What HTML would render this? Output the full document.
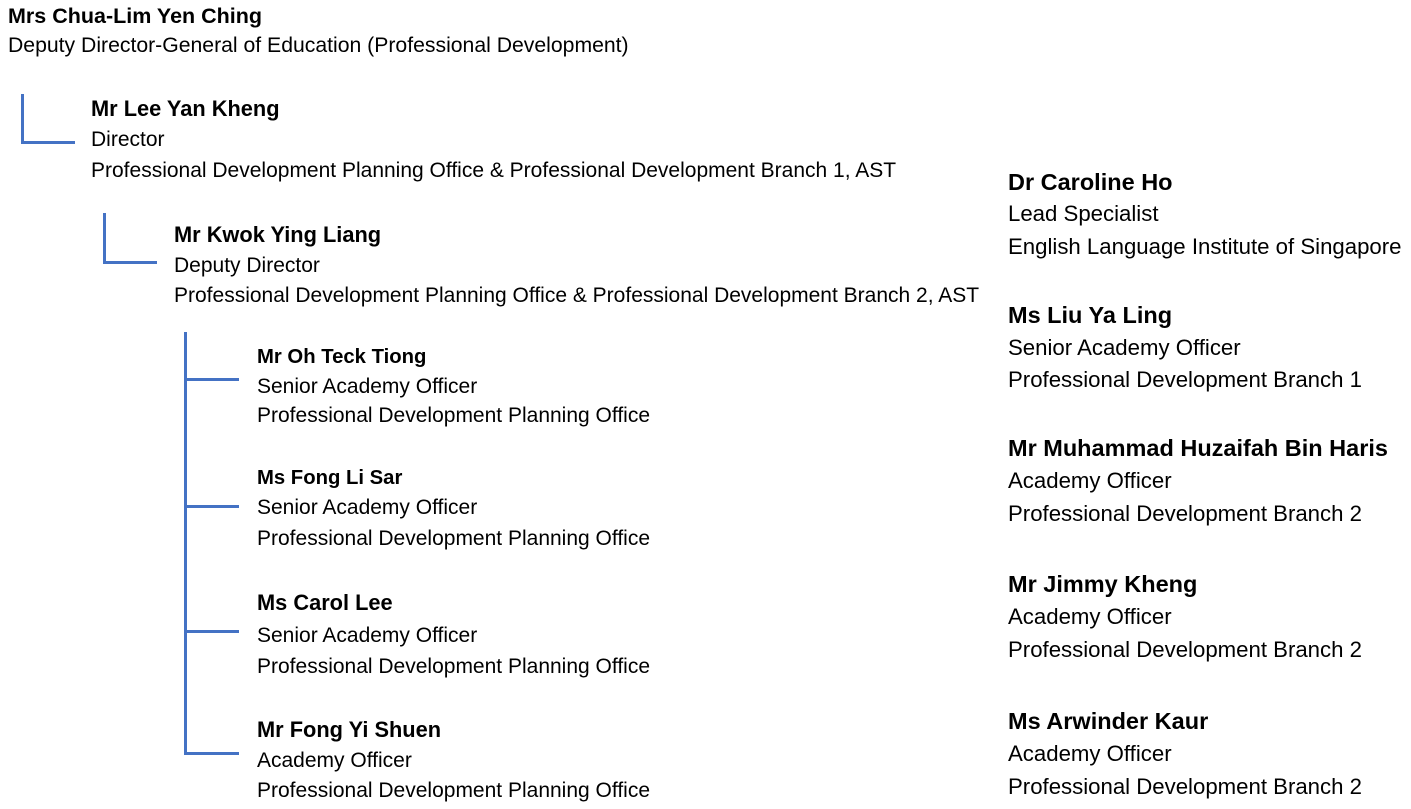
<!DOCTYPE html>
<html><head><meta charset="utf-8"><style>
html,body{margin:0;padding:0;background:#fff;}
body{width:1411px;height:809px;position:relative;overflow:hidden;font-family:"Liberation Sans",sans-serif;color:#000;}
.t{position:absolute;white-space:nowrap;height:24px;line-height:24px;font-size:21px;}
.b{font-weight:bold;font-size:21.8px;}
.r{font-size:22.2px;}
.rb{font-weight:bold;font-size:23.5px;}
.ln{position:absolute;background:#4472C4;}
</style></head><body>
<div class="t" style="left:8px;top:4px;font-weight:bold;font-size:21.5px">Mrs Chua-Lim Yen Ching</div>
<div class="t" style="left:8px;top:34px;font-size:21.2px">Deputy Director-General of Education (Professional Development)</div>

<div class="ln" style="left:21px;top:94px;width:3px;height:50px"></div>
<div class="ln" style="left:21px;top:141px;width:54px;height:3px"></div>
<div class="t b" style="left:91px;top:97px">Mr Lee Yan Kheng</div>
<div class="t" style="left:91px;top:128px">Director</div>
<div class="t" style="left:91px;top:159px;font-size:21px">Professional Development Planning Office &amp; Professional Development Branch 1, AST</div>

<div class="ln" style="left:103px;top:213px;width:3px;height:51px"></div>
<div class="ln" style="left:103px;top:261px;width:54px;height:3px"></div>
<div class="t b" style="left:174px;top:223px">Mr Kwok Ying Liang</div>
<div class="t" style="left:174px;top:254px">Deputy Director</div>
<div class="t" style="left:174px;top:284px">Professional Development Planning Office &amp; Professional Development Branch 2, AST</div>

<div class="ln" style="left:184px;top:332px;width:3px;height:423px"></div>
<div class="ln" style="left:184px;top:378px;width:55px;height:3px"></div>
<div class="ln" style="left:184px;top:505px;width:55px;height:3px"></div>
<div class="ln" style="left:184px;top:630px;width:55px;height:3px"></div>
<div class="ln" style="left:184px;top:752px;width:55px;height:3px"></div>

<div class="t" style="left:257px;top:345px;font-weight:bold;font-size:20.3px">Mr Oh Teck Tiong</div>
<div class="t" style="left:257px;top:375px">Senior Academy Officer</div>
<div class="t" style="left:257px;top:404px">Professional Development Planning Office</div>
<div class="t" style="left:257px;top:466px;font-weight:bold;font-size:20.3px">Ms Fong Li Sar</div>
<div class="t" style="left:257px;top:496px">Senior Academy Officer</div>
<div class="t" style="left:257px;top:527px">Professional Development Planning Office</div>
<div class="t b" style="left:257px;top:591px">Ms Carol Lee</div>
<div class="t" style="left:257px;top:624px">Senior Academy Officer</div>
<div class="t" style="left:257px;top:655px">Professional Development Planning Office</div>
<div class="t b" style="left:257px;top:718px">Mr Fong Yi Shuen</div>
<div class="t" style="left:257px;top:749px">Academy Officer</div>
<div class="t" style="left:257px;top:779px">Professional Development Planning Office</div>

<div class="t rb" style="left:1008px;top:170px">Dr Caroline Ho</div>
<div class="t r" style="left:1008px;top:202px">Lead Specialist</div>
<div class="t r" style="left:1008px;top:235px">English Language Institute of Singapore</div>
<div class="t rb" style="left:1008px;top:303px">Ms Liu Ya Ling</div>
<div class="t r" style="left:1008px;top:336px">Senior Academy Officer</div>
<div class="t r" style="left:1008px;top:368px">Professional Development Branch 1</div>
<div class="t rb" style="left:1008px;top:436px">Mr Muhammad Huzaifah Bin Haris</div>
<div class="t r" style="left:1008px;top:469px">Academy Officer</div>
<div class="t r" style="left:1008px;top:502px">Professional Development Branch 2</div>
<div class="t rb" style="left:1008px;top:572px">Mr Jimmy Kheng</div>
<div class="t r" style="left:1008px;top:605px">Academy Officer</div>
<div class="t r" style="left:1008px;top:638px">Professional Development Branch 2</div>
<div class="t rb" style="left:1008px;top:709px">Ms Arwinder Kaur</div>
<div class="t r" style="left:1008px;top:742px">Academy Officer</div>
<div class="t r" style="left:1008px;top:775px">Professional Development Branch 2</div>
</body></html>
